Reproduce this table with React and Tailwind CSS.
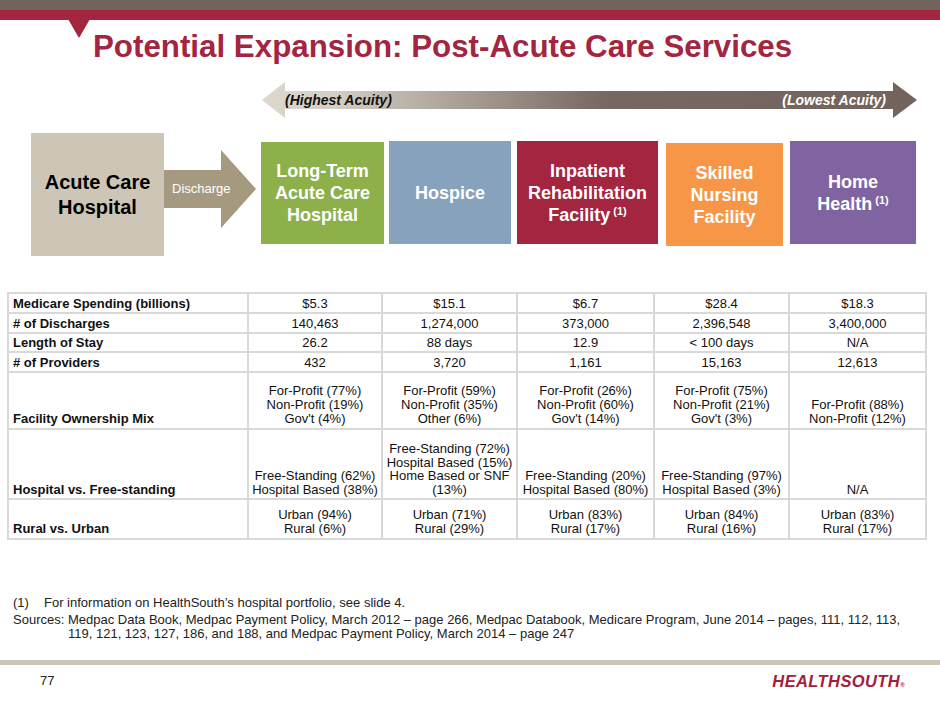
import React from 'react';

const rows = [
  { label: 'Medicare Spending (billions)', h: 'h-[20px]', cells: ['$5.3', '$15.1', '$6.7', '$28.4', '$18.3'] },
  { label: '# of Discharges', h: 'h-[20px]', cells: ['140,463', '1,274,000', '373,000', '2,396,548', '3,400,000'] },
  { label: 'Length of Stay', h: 'h-[19px]', cells: ['26.2', '88 days', '12.9', '< 100 days', 'N/A'] },
  { label: '# of Providers', h: 'h-[20px]', cells: ['432', '3,720', '1,161', '15,163', '12,613'] },
  {
    label: 'Facility Ownership Mix',
    h: 'h-[57px]',
    lead: 'leading-[14px]',
    cells: [
      ['For-Profit (77%)', 'Non-Profit (19%)', "Gov't (4%)"],
      ['For-Profit (59%)', 'Non-Profit (35%)', 'Other (6%)'],
      ['For-Profit (26%)', 'Non-Profit (60%)', "Gov't (14%)"],
      ['For-Profit (75%)', 'Non-Profit (21%)', "Gov't (3%)"],
      ['For-Profit (88%)', 'Non-Profit (12%)'],
    ],
  },
  {
    label: 'Hospital vs. Free-standing',
    h: 'h-[70px]',
    lead: 'leading-[13.5px]',
    cells: [
      ['Free-Standing (62%)', 'Hospital Based (38%)'],
      ['Free-Standing (72%)', 'Hospital Based (15%)', 'Home Based or SNF', '(13%)'],
      ['Free-Standing (20%)', 'Hospital Based (80%)'],
      ['Free-Standing (97%)', 'Hospital Based (3%)'],
      ['N/A'],
    ],
  },
  {
    label: 'Rural vs. Urban',
    h: 'h-[40px]',
    lead: 'leading-[14px]',
    cells: [
      ['Urban (94%)', 'Rural (6%)'],
      ['Urban (71%)', 'Rural (29%)'],
      ['Urban (83%)', 'Rural (17%)'],
      ['Urban (84%)', 'Rural (16%)'],
      ['Urban (83%)', 'Rural (17%)'],
    ],
  },
];

function Sup() {
  return <sup className="text-[11px] ml-[3px]">(1)</sup>;
}

export default function App() {
  return (
    <div className="w-[940px] h-[705px] bg-white overflow-hidden font-['Liberation_Sans',Arial,sans-serif] text-[#111]">
      {/* header bars */}
      <div className="h-[10px] bg-[#72635d]" />
      <div className="h-[10px] bg-[#a3253f] relative">
        <div className="absolute left-[68px] top-[9px] w-0 h-0 border-l-[11px] border-r-[11px] border-t-[19px] border-l-transparent border-r-transparent border-t-[#a3253f]" />
      </div>

      <h1 className="mt-[11px] pl-[93px] text-[31.3px] leading-[31px] font-bold text-[#a3253f]">
        Potential Expansion: Post-Acute Care Services
      </h1>

      {/* acuity arrow */}
      <div className="relative mt-[18px] h-[40px]">
        <svg className="absolute inset-0" width="940" height="40" viewBox="0 0 940 40">
          <defs>
            <linearGradient id="acuity" gradientUnits="userSpaceOnUse" x1="262" y1="0" x2="917" y2="0">
              <stop offset="0" stopColor="#ddd8ce" />
              <stop offset="0.11" stopColor="#d4cec3" />
              <stop offset="0.32" stopColor="#a69b92" />
              <stop offset="0.52" stopColor="#776962" />
              <stop offset="1" stopColor="#72635d" />
            </linearGradient>
          </defs>
          <path d="M262,20 L285,2 L285,11 L893,11 L893,2 L917,20 L893,38 L893,29 L285,29 L285,38 Z" fill="url(#acuity)" />
        </svg>
        <div className="relative h-full flex items-center justify-between pl-[285px] pr-[54px] text-[14px] font-bold italic">
          <span className="text-[#111]">(Highest Acuity)</span>
          <span className="text-white">(Lowest Acuity)</span>
        </div>
      </div>

      {/* care settings */}
      <div className="mt-[13px] pl-[31px] flex items-start">
        <div className="w-[133px] h-[123px] bg-[#cdc6b7] flex items-center justify-center text-center text-[20px] leading-[25px] font-bold text-black">
          Acute Care
          <br />
          Hospital
        </div>
        <div className="relative mt-[17px] w-[92px] h-[78px]">
          <svg className="absolute inset-0" width="92" height="78" viewBox="0 0 92 78">
            <path d="M0,20 L57,20 L57,0 L92,39 L57,78 L57,58 L0,58 Z" fill="#a59a80" />
          </svg>
          <div className="relative h-full flex items-center pl-[8px] text-[13px] text-white">Discharge</div>
        </div>
        <div className="ml-[5px] mt-[9px] w-[123px] h-[102px] bg-[#8db04b] flex items-center justify-center text-center text-white font-bold text-[18px] leading-[22px]">
          Long-Term
          <br />
          Acute Care
          <br />
          Hospital
        </div>
        <div className="ml-[5px] mt-[8px] w-[122px] h-[103px] bg-[#87a2bc] flex items-center justify-center text-white font-bold text-[18px] leading-[22px]">
          Hospice
        </div>
        <div className="ml-[6px] mt-[8px] w-[141px] h-[103px] bg-[#a3253f] flex items-center justify-center text-center text-white font-bold text-[18px] leading-[22px]">
          <div>
            Inpatient
            <br />
            Rehabilitation
            <br />
            Facility
            <Sup />
          </div>
        </div>
        <div className="ml-[8px] mt-[10px] w-[117px] h-[103px] bg-[#f79646] flex items-center justify-center text-center text-white font-bold text-[18px] leading-[22px]">
          Skilled
          <br />
          Nursing
          <br />
          Facility
        </div>
        <div className="ml-[7px] mt-[8px] w-[126px] h-[103px] bg-[#8064a2] flex items-center justify-center text-center text-white font-bold text-[18px] leading-[22px]">
          <div>
            Home
            <br />
            Health
            <Sup />
          </div>
        </div>
      </div>

      {/* data table */}
      <table className="mt-[36px] ml-[7px] w-[918px] border-collapse text-[13px] text-[#111] table-fixed">
        <colgroup>
          <col className="w-[240px]" />
          <col className="w-[134px]" />
          <col className="w-[135px]" />
          <col className="w-[137px]" />
          <col className="w-[135px]" />
          <col className="w-[137px]" />
        </colgroup>
        <tbody>
          {rows.map((row) => {
            const cellStyle = row.lead
              ? `align-bottom pb-[2px] ${row.lead}`
              : 'align-middle leading-[15px]';
            return (
              <tr key={row.label} className={row.h}>
                <td className={`border-2 border-[#d9d9d9] pl-[4px] font-bold ${cellStyle}`}>{row.label}</td>
                {row.cells.map((cell, i) => (
                  <td key={i} className={`border-2 border-[#d9d9d9] text-center ${cellStyle}`}>
                    {Array.isArray(cell) ? cell.map((line, j) => <div key={j}>{line}</div>) : cell}
                  </td>
                ))}
              </tr>
            );
          })}
        </tbody>
      </table>

      {/* notes */}
      <div className="mt-[56px] pl-[13px] text-[13px] leading-[14px] text-[#222]">
        <div className="flex">
          <span className="w-[31px] shrink-0">(1)</span>
          <span>For information on HealthSouth’s hospital portfolio, see slide 4.</span>
        </div>
        <div className="flex mt-[3px]">
          <span className="w-[55px] shrink-0">Sources:</span>
          <div className="whitespace-nowrap">
            Medpac Data Book, Medpac Payment Policy, March 2012 – page 266, Medpac Databook, Medicare Program, June 2014 – pages, 111, 112, 113,
            <br />
            119, 121, 123, 127, 186, and 188, and Medpac Payment Policy, March 2014 – page 247
          </div>
        </div>
      </div>

      {/* footer */}
      <div className="mt-[19px] h-[5px] bg-[#cdc6b7]" />
      <div className="h-[32px] flex items-center justify-between pl-[40px] pr-[35px]">
        <span className="text-[13px] text-[#222]">77</span>
        <span className="text-[16.5px] leading-none font-bold italic tracking-[0.4px] text-[#a3203a]">
          HEALTHSOUTH
          <span className="text-[6px] not-italic align-baseline">®</span>
        </span>
      </div>
    </div>
  );
}
